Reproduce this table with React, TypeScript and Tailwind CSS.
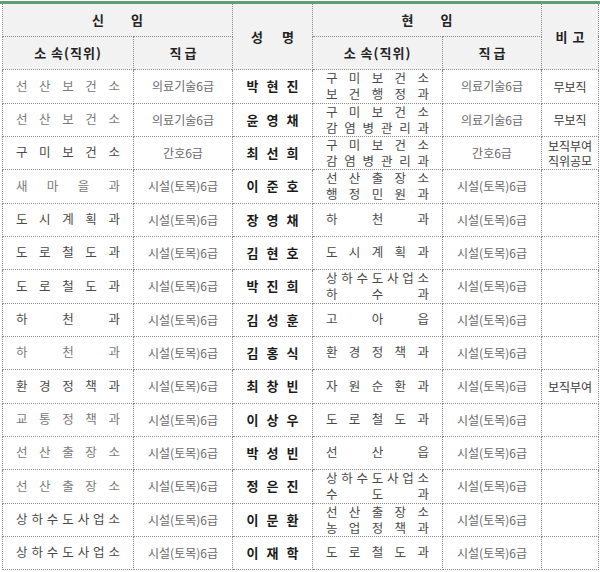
import React from "react";

interface Row {
  from: string;
  grade: string;
  name: string;
  to: string[];
  toGrade: string;
  note?: string[];
  dim?: boolean;
  dashed?: boolean;
}

const rows: Row[] = [
  { from: "선산보건소", grade: "의료기술6급", name: "박현진", to: ["구미보건소", "보건행정과"], toGrade: "의료기술6급", note: ["무보직"], dim: true },
  { from: "선산보건소", grade: "의료기술6급", name: "윤영채", to: ["구미보건소", "감염병관리과"], toGrade: "의료기술6급", note: ["무보직"], dim: true },
  { from: "구미보건소", grade: "간호6급", name: "최선희", to: ["구미보건소", "감염병관리과"], toGrade: "간호6급", note: ["보직부여", "직위공모"] },
  { from: "새마을과", grade: "시설(토목)6급", name: "이준호", to: ["선산출장소", "행정민원과"], toGrade: "시설(토목)6급", dim: true },
  { from: "도시계획과", grade: "시설(토목)6급", name: "장영채", to: ["하천과"], toGrade: "시설(토목)6급" },
  { from: "도로철도과", grade: "시설(토목)6급", name: "김현호", to: ["도시계획과"], toGrade: "시설(토목)6급" },
  { from: "도로철도과", grade: "시설(토목)6급", name: "박진희", to: ["상하수도사업소", "하수과"], toGrade: "시설(토목)6급" },
  { from: "하천과", grade: "시설(토목)6급", name: "김성훈", to: ["고아읍"], toGrade: "시설(토목)6급" },
  { from: "하천과", grade: "시설(토목)6급", name: "김홍식", to: ["환경정책과"], toGrade: "시설(토목)6급", dim: true, dashed: true },
  { from: "환경정책과", grade: "시설(토목)6급", name: "최창빈", to: ["자원순환과"], toGrade: "시설(토목)6급", note: ["보직부여"] },
  { from: "교통정책과", grade: "시설(토목)6급", name: "이상우", to: ["도로철도과"], toGrade: "시설(토목)6급", dim: true },
  { from: "선산출장소", grade: "시설(토목)6급", name: "박성빈", to: ["선산읍"], toGrade: "시설(토목)6급", dim: true },
  { from: "선산출장소", grade: "시설(토목)6급", name: "정은진", to: ["상하수도사업소", "수도과"], toGrade: "시설(토목)6급", dim: true },
  { from: "상하수도사업소", grade: "시설(토목)6급", name: "이문환", to: ["선산출장소", "농업정책과"], toGrade: "시설(토목)6급" },
  { from: "상하수도사업소", grade: "시설(토목)6급", name: "이재학", to: ["도로철도과"], toGrade: "시설(토목)6급" },
];

// Excel "distributed" alignment: spread the characters over the cell
const Spread = ({ text }: { text: string }) => (
  <div className="flex justify-between">
    {[...text].map((c, i) => (
      <span key={i}>{c}</span>
    ))}
  </div>
);

const cell = "border border-dotted border-[#8a8a8a] p-0";
const dash = "border-t-dashed border-t-[#c4c4c4]";

const App = () => {
  return (
    <div className="w-[600px] h-[572px] bg-white overflow-hidden font-['Noto_Sans_CJK_KR',sans-serif] text-[12px]">
      <div className="mt-[1px] h-[3px] bg-[#5f9e72]" />
      <table className="ml-[2px] w-[596px] table-fixed border-collapse">
        <colgroup>
          <col className="w-[131px]" />
          <col className="w-[99px]" />
          <col className="w-[80px]" />
          <col className="w-[130px]" />
          <col className="w-[99px]" />
          <col className="w-[57px]" />
        </colgroup>
        <thead className="bg-[#f2f2f2] text-[#222] font-bold text-[13px]">
          <tr className="h-[32px]">
            <th colSpan={2} className={`${cell} border-t-0`}>
              <div className="flex justify-center gap-[27px]">
                <span>신</span>
                <span>임</span>
              </div>
            </th>
            <th rowSpan={2} className={`${cell} border-t-0`}>
              <div className="flex justify-center gap-[19px]">
                <span>성</span>
                <span>명</span>
              </div>
            </th>
            <th colSpan={2} className={`${cell} border-t-0`}>
              <div className="flex justify-center gap-[27px]">
                <span>현</span>
                <span>임</span>
              </div>
            </th>
            <th rowSpan={2} className={`${cell} border-t-0`}>
              <div className="flex justify-center gap-[5px]">
                <span>비</span>
                <span>고</span>
              </div>
            </th>
          </tr>
          <tr className="h-[33px]">
            <th className={`${cell} tracking-[1px]`}>소 속(직위)</th>
            <th className={cell}>직 급</th>
            <th className={`${cell} tracking-[1px]`}>소 속(직위)</th>
            <th className={cell}>직 급</th>
          </tr>
        </thead>
        <tbody>
          {rows.map((r, i) => (
            <tr key={i} className={i % 3 === 0 ? "h-[34px]" : "h-[33px]"}>
              <td className={`${cell} px-[13px] text-[12.5px] ${r.dim ? "text-[#7a7a7a]" : "text-[#4a4a4a]"} ${r.dashed ? dash : ""}`}>
                <Spread text={r.from} />
              </td>
              <td className={`${cell} text-center text-[#6a6a6a] ${r.dashed ? dash : ""}`}>{r.grade}</td>
              <td className={`${cell} ${r.dashed ? dash : ""}`}>
                <div className="flex justify-center gap-[8px] font-bold text-[13px] text-[#1a1a1a]">
                  {[...r.name].map((c, j) => (
                    <span key={j}>{c}</span>
                  ))}
                </div>
              </td>
              <td className={`${cell} px-[13px] text-[12.5px] text-[#4a4a4a] ${r.dashed ? dash : ""}`}>
                {r.to.length > 1 ? (
                  <div className="h-[31px] flex flex-col justify-center leading-[16px]">
                    {r.to.map((t, j) => (
                      <Spread key={j} text={t} />
                    ))}
                  </div>
                ) : (
                  <Spread text={r.to[0]} />
                )}
              </td>
              <td className={`${cell} text-center text-[#6a6a6a] ${r.dashed ? dash : ""}`}>{r.toGrade}</td>
              <td className={`${cell} text-center text-[#3a3a3a] ${r.dashed ? dash : ""}`}>
                <div className="h-[31px] flex flex-col justify-center leading-[15px]">
                  {r.note?.map((n, j) => (
                    <div key={j}>{n}</div>
                  ))}
                </div>
              </td>
            </tr>
          ))}
        </tbody>
      </table>
    </div>
  );
};

export default App;
